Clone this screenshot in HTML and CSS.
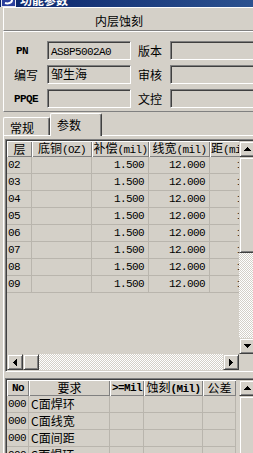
FILE: index.html
```html
<!DOCTYPE html>
<html lang="zh-CN">
<head>
<meta charset="UTF-8">
<meta name="viewport" content="width=device-width, initial-scale=1.0">
<link rel="stylesheet" href="styles.css">
</head>
<body>

<div class="titlebar">
  <div class="titlebar-in">
    <svg class="app-icon" width="15" height="15" viewBox="0 0 15 15"><rect x="0.5" y="0.5" width="14" height="14" fill="#2b3f9e" stroke="#e8e8f0"/><path d="M4 11c3 1 7 0 7-3" stroke="#fff" stroke-width="2" fill="none"/></svg>
    <span>功能参数</span>
  </div>
</div>

<div class="window">
  <div class="head">内层蚀刻</div>

  <div class="info">
    <div class="lbl pn en b">PN</div>
    <div class="edit"><span class="en">AS8P5002A0</span></div>
    <div class="lbl2">版本</div>
    <div class="edit"></div>

    <div class="lbl">编写</div>
    <div class="edit">邹生海</div>
    <div class="lbl2">审核</div>
    <div class="edit"></div>

    <div class="lbl en b">PPQE</div>
    <div class="edit"></div>
    <div class="lbl2">文控</div>
    <div class="edit"></div>
  </div>

  <div class="tabstrip">
    <div class="tab">常规</div>
    <div class="tab active">参数</div>
  </div>

  <div class="tabpage">
    <div class="grid grid-main">
      <div class="cells">
        <table class="t1">
          <tr>
            <th>层</th>
            <th>底铜<span class="en">(OZ)</span></th>
            <th>补偿<span class="en">(mil)</span></th>
            <th>线宽<span class="en">(mil)</span></th>
            <th class="left">距<span class="en">(mil)</span></th>
          </tr>
          <tr><td class="en">02</td><td></td><td class="en num">1.500</td><td class="en num">12.000</td><td class="en num">12.000</td></tr>
          <tr><td class="en">03</td><td></td><td class="en num">1.500</td><td class="en num">12.000</td><td class="en num">12.000</td></tr>
          <tr><td class="en">04</td><td></td><td class="en num">1.500</td><td class="en num">12.000</td><td class="en num">12.000</td></tr>
          <tr><td class="en">05</td><td></td><td class="en num">1.500</td><td class="en num">12.000</td><td class="en num">12.000</td></tr>
          <tr><td class="en">06</td><td></td><td class="en num">1.500</td><td class="en num">12.000</td><td class="en num">12.000</td></tr>
          <tr><td class="en">07</td><td></td><td class="en num">1.500</td><td class="en num">12.000</td><td class="en num">12.000</td></tr>
          <tr><td class="en">08</td><td></td><td class="en num">1.500</td><td class="en num">12.000</td><td class="en num">12.000</td></tr>
          <tr><td class="en">09</td><td></td><td class="en num">1.500</td><td class="en num">12.000</td><td class="en num">12.000</td></tr>
        </table>
      </div>
      <div class="vscroll">
        <div class="sbtn"><svg width="7" height="4" viewBox="0 0 7 4"><path d="M3 0h1v1h-1zM2 1h3v1h-3zM1 2h5v1h-5zM0 3h7v1h-7z"/></svg></div>
        <div class="thumb v-thumb"></div>
        <div class="track"></div>
        <div class="sbtn"><svg width="7" height="4" viewBox="0 0 7 4"><path d="M0 0h7v1h-7zM1 1h5v1h-5zM2 2h3v1h-3zM3 3h1v1h-1z"/></svg></div>
      </div>
      <div class="hscroll">
        <div class="sbtn"><svg width="4" height="7" viewBox="0 0 4 7"><path d="M3 0h1v7h-1zM2 1h1v5h-1zM1 2h1v3h-1zM0 3h1v1h-1z"/></svg></div>
        <div class="thumb h-thumb"></div>
        <div class="track"></div>
        <div class="sbtn"><svg width="4" height="7" viewBox="0 0 4 7"><path d="M0 0h1v7h-1zM1 1h1v5h-1zM2 2h1v3h-1zM3 3h1v1h-1z"/></svg></div>
      </div>
      <div class="corner"></div>
    </div>

    <div class="grid grid-req">
      <div class="cells">
        <table class="t2">
          <tr>
            <th class="en b">No</th>
            <th>要求</th>
            <th class="en b">&gt;=Mil</th>
            <th>蚀刻<span class="en b">(Mil)</span></th>
            <th>公差</th>
          </tr>
          <tr><td class="en">000</td><td>C面焊环</td><td></td><td></td><td></td></tr>
          <tr><td class="en">000</td><td>C面线宽</td><td></td><td></td><td></td></tr>
          <tr><td class="en">000</td><td>C面间距</td><td></td><td></td><td></td></tr>
          <tr><td class="en">000</td><td>S面焊环</td><td></td><td></td><td></td></tr>
        </table>
      </div>
      <div class="vscroll">
        <div class="sbtn"><svg width="7" height="4" viewBox="0 0 7 4"><path d="M3 0h1v1h-1zM2 1h3v1h-3zM1 2h5v1h-5zM0 3h7v1h-7z"/></svg></div>
        <div class="thumb fill"></div>
      </div>
    </div>
  </div>
</div>

</body>
</html>
```

FILE: styles.css
```css
* {
  box-sizing: border-box;
}
html, body {
  margin: 0;
}
body {
  width: 253px;
  height: 453px;
  overflow: hidden;
  background: #d4d0c8;
  font-family: "Noto Sans CJK SC", sans-serif;
  font-size: 12px;
  color: #000;
}
.en {
  font-family: "Liberation Mono", "Noto Sans CJK SC", monospace;
  font-size: 11px;
  letter-spacing: -0.6px;
}
.b {
  font-weight: bold;
}

/* title bar, only its lower edge is on screen */
.titlebar {
  height: 7px;
  overflow: hidden;
  background: linear-gradient(90deg, #0a246a, #2c5290);
}
.titlebar-in {
  display: flex;
  align-items: center;
  gap: 4px;
  height: 16px;
  margin-top: -9px;
  padding-left: 1px;
  color: #fff;
  font-weight: bold;
  white-space: nowrap;
}

.window {
  margin-left: 3px;
  width: 262px;
}
.head {
  height: 24px;
  border-top: 1px solid #fff;
  border-left: 1px solid #fff;
  border-bottom: 1px solid #808080;
  padding: 3px 0 0 91px;
  line-height: 19px;
}

/* PN / editor fields */
.info {
  height: 81px;
  border-top: 1px solid #fff;
  border-left: 1px solid #fff;
  border-bottom: 1px solid #808080;
  padding-top: 9px;
  display: grid;
  grid-template-columns: 43px 84px 39px 96px;
  grid-auto-rows: 19px;
  row-gap: 5px;
  align-items: center;
}
.lbl {
  padding-left: 10px;
}
.lbl.pn {
  padding-left: 12px;
}
.lbl2 {
  padding-left: 7px;
}
.edit {
  height: 19px;
  border: 1px solid;
  border-color: #808080 #fff #fff #808080;
  box-shadow: inset 1px 1px #404040, inset -1px -1px #d4d0c8;
  padding: 0 3px;
  line-height: 16px;
  white-space: nowrap;
  overflow: hidden;
}

/* tabs */
.tabstrip {
  display: flex;
  align-items: flex-end;
  height: 23px;
}
.tab {
  width: 47px;
  height: 18px;
  border-top: 1px solid #fff;
  border-left: 1px solid #fff;
  border-right: 1px solid #404040;
  box-shadow: inset -1px 0 #808080;
  border-radius: 2px 2px 0 0;
  padding: 2px 0 0 6px;
  line-height: 16px;
}
.tab.active {
  width: 52px;
  height: 23px;
  margin-bottom: -1px;
  position: relative;
  background: #d4d0c8;
  padding-top: 3px;
}
.tabpage {
  border-top: 1px solid #fff;
  border-left: 1px solid #fff;
  padding: 3px 0 0 1px;
}

/* grids */
.grid {
  width: 252px;
  border: 1px solid;
  border-color: #808080 #fff #fff #808080;
  padding: 1px;
  box-shadow: inset 1px 1px #404040, inset -1px -1px #d4d0c8;
  display: grid;
  grid-template-columns: 232px 16px;
}
.grid-main {
  grid-template-rows: 213px 16px;
}
.grid-req {
  grid-template-rows: 100px;
  margin-top: 6px;
}
.cells {
  overflow: hidden;
}
table {
  table-layout: fixed;
  border-collapse: separate;
  border-spacing: 0;
}
.t1 {
  width: 264px;
}
.t2 {
  width: 229px;
}
th {
  height: 16px;
  padding: 0;
  font-weight: normal;
  text-align: center;
  white-space: nowrap;
  overflow: hidden;
  line-height: 14px;
  box-shadow: inset 1px 1px #fff, inset -1px -1px #808080;
}
th.en.b {
  font-weight: bold;
}
th.left {
  text-align: left;
  padding-left: 1px;
}
td {
  height: 17px;
  padding: 0 4px 0 1px;
  border-right: 1px solid #b9b5ad;
  border-bottom: 1px solid #b9b5ad;
  white-space: nowrap;
  overflow: hidden;
  line-height: 16px;
}
td.num {
  text-align: right;
}
.t1 td:nth-child(5) {
  padding-right: 0;
}
.t1 th:nth-child(1) { width: 25px; }
.t1 th:nth-child(2) { width: 60px; }
.t1 th:nth-child(3) { width: 57px; }
.t1 th:nth-child(4) { width: 61px; }
.t1 th:nth-child(5) { width: 64px; }
.t2 th:nth-child(1) { width: 22px; }
.t2 th:nth-child(2) { width: 81px; }
.t2 th:nth-child(3) { width: 34px; }
.t2 th:nth-child(4) { width: 59px; }
.t2 th:nth-child(5) { width: 33px; }
.t2 td:nth-child(2) {
  padding-left: 2px;
}

/* scroll bars */
.vscroll {
  display: flex;
  flex-direction: column;
}
.hscroll {
  display: flex;
}
.sbtn, .thumb {
  flex: none;
  width: 16px;
  height: 16px;
  background: #d4d0c8;
  border: 1px solid;
  border-color: #d4d0c8 #404040 #404040 #d4d0c8;
  box-shadow: inset 1px 1px #fff, inset -1px -1px #808080;
  display: flex;
  align-items: center;
  justify-content: center;
}
.v-thumb {
  height: 96px;
}
.thumb.fill {
  flex: 1;
  height: auto;
}
.track {
  flex: 1;
  background: repeating-conic-gradient(#fff 0 25%, #d4d0c8 0 50%) 0 0 / 2px 2px;
}
.corner {
  background: #d4d0c8;
}
```
